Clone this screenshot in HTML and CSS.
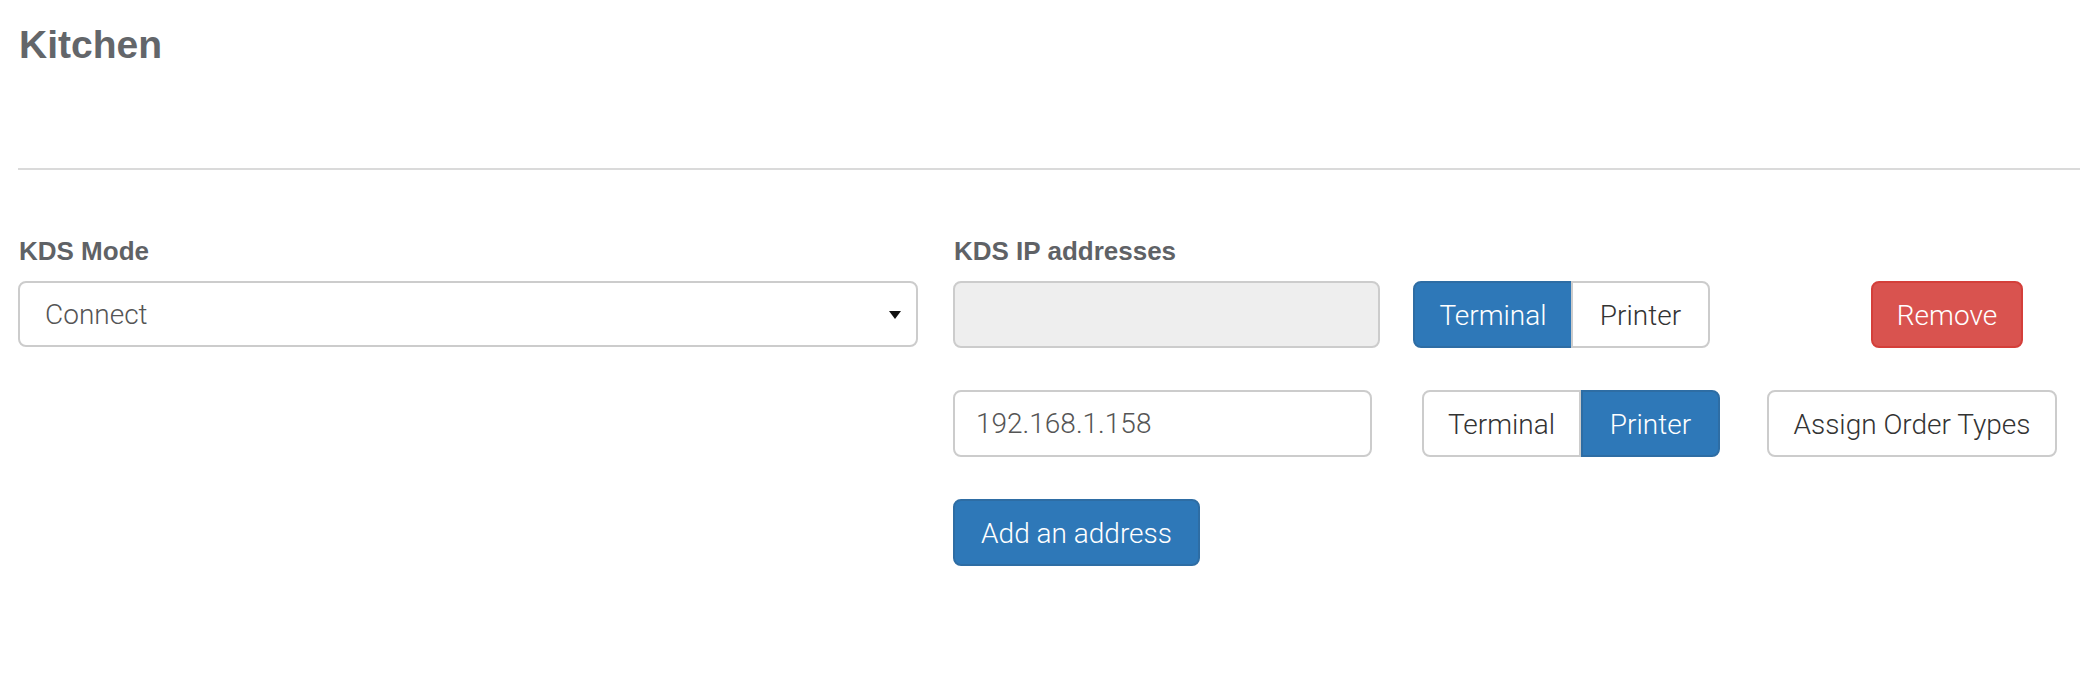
FILE: index.html
```html
<!DOCTYPE html>
<html lang="en">
<head>
    <meta charset="UTF-8" />
    <meta name="viewport" content="width=device-width, initial-scale=1.0" />
    <title>Kitchen</title>
    <link rel="stylesheet" href="styles.css">
</head>
<body>
    <div class="page">
        <h2 class="page-title">Kitchen</h2>
        <hr class="divider" />

        <div class="settings">
            <div class="field mode">
                <label class="field-label" for="kds-mode">KDS Mode</label>
                <div class="select-wrap">
                    <select id="kds-mode" class="mode-select">
                        <option>Connect</option>
                        <option>Standalone</option>
                    </select>
                </div>
            </div>

            <div class="field addresses">
                <label class="field-label">KDS IP addresses</label>

                <div class="ip-row row-first">
                    <input type="text" class="ip-input" disabled />
                    <div class="btn-group">
                        <button class="btn btn-primary">Terminal</button>
                        <button class="btn">Printer</button>
                    </div>
                    <button class="btn btn-danger btn-remove">Remove</button>
                </div>

                <div class="ip-row row-second">
                    <input type="text" class="ip-input" value="192.168.1.158" />
                    <div class="btn-group">
                        <button class="btn">Terminal</button>
                        <button class="btn btn-primary">Printer</button>
                    </div>
                    <button class="btn btn-assign">Assign Order Types</button>
                </div>

                <button class="btn btn-primary btn-add">Add an address</button>
            </div>
        </div>
    </div>
</body>
</html>
```

FILE: styles.css
```css
body {
    margin: 0;
    font-family: Roboto, "Liberation Sans", sans-serif;
    color: #333;
    background: #fff;
}

.page {
    padding-left: 18px;
}

.page-title {
    margin: 23px 0 0 1px;
    font-family: "Liberation Sans", Arial, sans-serif;
    font-size: 39px;
    line-height: 44px;
    font-weight: bold;
    color: #63666a;
}

.divider {
    margin: 101px 0 0;
    border: 0;
    border-top: 2px solid #dadada;
    height: 0;
}

.settings {
    display: flex;
    gap: 35px;
    margin-top: 66px;
}

.field-label {
    display: block;
    font-family: "Liberation Sans", Arial, sans-serif;
    font-weight: bold;
    font-size: 26px;
    line-height: 30px;
    color: #5f6266;
    margin: 0 0 15px 1px;
}

.mode {
    width: 900px;
}

.select-wrap {
    position: relative;
}

.select-wrap::after {
    content: "";
    position: absolute;
    right: 17px;
    top: 30px;
    border-left: 6px solid transparent;
    border-right: 6px solid transparent;
    border-top: 8px solid #111;
    pointer-events: none;
}

.mode-select {
    display: block;
    width: 100%;
    height: 66px;
    box-sizing: border-box;
    appearance: none;
    -webkit-appearance: none;
    border: 2px solid #ccc;
    border-radius: 8px;
    background: #fff;
    padding: 0 25px;
    font-family: Roboto, sans-serif;
    font-weight: 300;
    font-size: 28px;
    color: #555;
}

.ip-row {
    display: flex;
    align-items: center;
    margin-bottom: 42px;
}

.ip-input {
    height: 67px;
    box-sizing: border-box;
    border: 2px solid #ccc;
    border-radius: 8px;
    padding: 0 21px;
    background: #fff;
    font-family: Roboto, sans-serif;
    font-weight: 300;
    font-size: 28px;
    color: #555;
}

.ip-input:disabled {
    background: #eee;
}

.btn {
    height: 67px;
    box-sizing: border-box;
    border: 2px solid #ccc;
    border-radius: 8px;
    background: #fff;
    padding: 2px 0 0;
    font-family: Roboto, sans-serif;
    font-weight: 300;
    font-size: 28px;
    color: #333;
    cursor: pointer;
}

.btn-primary {
    background: #2e78b8;
    border-color: #2e6da4;
    color: #fff;
}

.btn-danger {
    background: #d9534f;
    border-color: #d43f3a;
    color: #fff;
}

.btn-group {
    display: flex;
}

.btn-group .btn:first-child {
    width: 160px;
    border-radius: 8px 0 0 8px;
}

.btn-group .btn:last-child {
    width: 139px;
    border-radius: 0 8px 8px 0;
    margin-left: -2px;
}

.btn-group .btn-primary:last-child {
    margin-left: 0;
}

.row-first .ip-input {
    width: 427px;
}

.row-first .btn-group {
    margin-left: 33px;
}

.btn-remove {
    width: 152px;
    margin-left: 161px;
}

.row-second .ip-input {
    width: 419px;
}

.row-second .btn-group {
    margin-left: 50px;
}

.row-second .btn-group .btn:first-child {
    width: 159px;
}

.btn-assign {
    width: 290px;
    margin-left: 47px;
}

.btn-add {
    width: 247px;
}
```
